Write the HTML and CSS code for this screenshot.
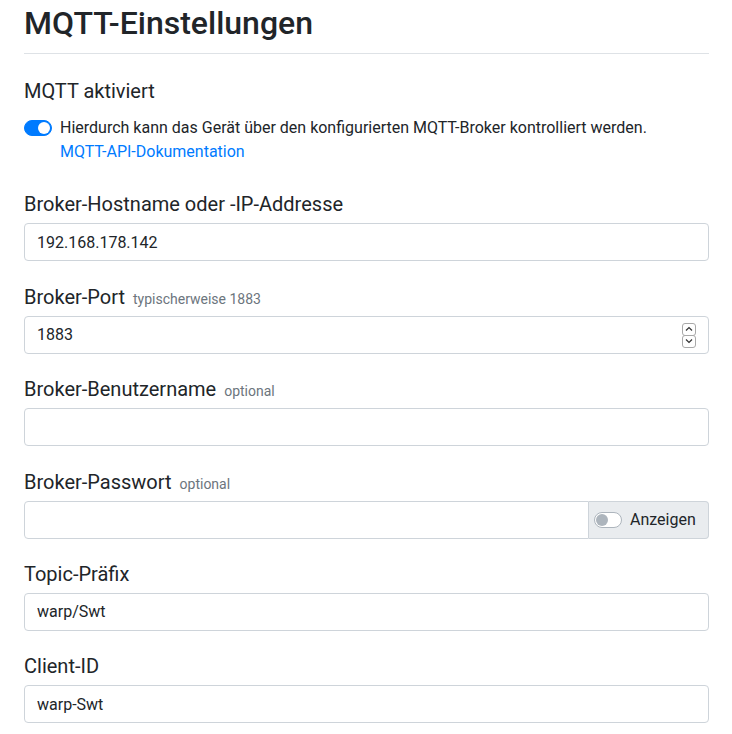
FILE: index.html
```html
<!DOCTYPE html>
<html lang="de">
<head>
<meta charset="utf-8">
<link rel="stylesheet" href="styles.css">
</head>
<body>
<main class="page">
  <h1 class="title">MQTT-Einstellungen</h1>
  <hr class="divider">

  <div class="group group-first">
    <div class="label">MQTT aktiviert</div>
    <label class="switch-row">
      <span class="switch on"><span class="knob"></span></span>
      <span class="switch-text">Hierdurch kann das Gerät über den konfigurierten MQTT-Broker kontrolliert werden.<br><a class="link" href="#">MQTT-API-Dokumentation</a></span>
    </label>
  </div>

  <div class="group">
    <label class="label">Broker-Hostname oder -IP-Addresse</label>
    <input class="field" type="text" value="192.168.178.142">
  </div>

  <div class="group">
    <label class="label">Broker-Port <span class="hint">typischerweise 1883</span></label>
    <div class="number-wrap">
      <input class="field field-number" type="number" value="1883">
      <span class="spinner" aria-hidden="true">
        <span class="spin-btn">
          <svg width="8" height="6" viewBox="0 0 8 6"><path d="M1 4.5 L4 1.5 L7 4.5" fill="none" stroke="#333" stroke-width="1.2"/></svg>
        </span>
        <span class="spin-btn">
          <svg width="8" height="6" viewBox="0 0 8 6"><path d="M1 1.5 L4 4.5 L7 1.5" fill="none" stroke="#333" stroke-width="1.2"/></svg>
        </span>
      </span>
    </div>
  </div>

  <div class="group">
    <label class="label">Broker-Benutzername <span class="hint">optional</span></label>
    <input class="field" type="text" value="">
  </div>

  <div class="group">
    <label class="label">Broker-Passwort <span class="hint">optional</span></label>
    <div class="input-group">
      <input class="field field-left" type="password" value="">
      <div class="addon">
        <span class="switch off"><span class="knob"></span></span>
        <span class="addon-text">Anzeigen</span>
      </div>
    </div>
  </div>

  <div class="group">
    <label class="label">Topic-Präfix</label>
    <input class="field" type="text" value="warp/Swt">
  </div>

  <div class="group">
    <label class="label">Client-ID</label>
    <input class="field" type="text" value="warp-Swt">
  </div>
</main>
</body>
</html>
```

FILE: styles.css
```css
* { box-sizing: border-box; }

html, body {
  margin: 0;
  padding: 0;
  background: #ffffff;
}

body {
  font-family: Roboto, "Liberation Sans", sans-serif;
  font-size: 16px;
  line-height: 1.5;
  color: #212529;
}

.page {
  width: 685px;
  margin-left: 24px;
}

.title {
  margin: 0;
  padding-top: 4px;
  font-size: 32px;
  font-weight: 500;
  line-height: 38px;
}

.divider {
  margin: 11px 0 0 0;
  border: 0;
  border-top: 1px solid #dee2e6;
  height: 0;
}

.group {
  margin-bottom: 16px;
}

.group-first {
  margin-top: 22px;
  margin-bottom: 21px;
}

.label {
  display: block;
  font-size: 20px;
  line-height: 30px;
  padding-top: 4.4px;
  margin-bottom: 4px;
}

.group-first .label {
  padding-top: 0;
  margin-bottom: 10px;
}

.hint {
  font-size: 14px;
  line-height: 1;
  color: #6c757d;
  margin-left: 3px;
}

.switch-row {
  display: flex;
  align-items: flex-start;
  gap: 8px;
}

.switch {
  position: relative;
  flex: none;
  display: inline-block;
  width: 28px;
  height: 16px;
  border-radius: 8px;
  border: 1px solid #adb5bd;
  background: #ffffff;
}

.switch-row .switch {
  margin-top: 4px;
}

.switch.on {
  background: #007bff;
  border-color: #007bff;
}

.knob {
  position: absolute;
  top: 1px;
  left: 1px;
  width: 12px;
  height: 12px;
  border-radius: 50%;
  background: #adb5bd;
}

.switch.on .knob {
  left: 13px;
  background: #ffffff;
}

.link {
  color: #007bff;
  text-decoration: none;
}

.field {
  display: block;
  width: 100%;
  height: 38px;
  padding: 6px 12px;
  font-family: inherit;
  font-size: 16px;
  line-height: 24px;
  color: #212529;
  background: #ffffff;
  border: 1px solid #ced4da;
  border-radius: 4px;
  outline: none;
}

.number-wrap {
  position: relative;
}

.field-number {
  -moz-appearance: textfield;
  padding-right: 32px;
}

.field-number::-webkit-inner-spin-button,
.field-number::-webkit-outer-spin-button {
  -webkit-appearance: none;
  margin: 0;
}

.spinner {
  position: absolute;
  right: 13px;
  top: 7px;
  width: 14px;
  height: 25px;
  display: flex;
  flex-direction: column;
}

.spin-btn {
  flex: 1;
  display: flex;
  align-items: center;
  justify-content: center;
  border: 1px solid #a9a9a9;
  border-radius: 3px;
  background: #ffffff;
}

.spin-btn + .spin-btn {
  margin-top: -1px;
}

.input-group {
  display: flex;
}

.field-left {
  flex: 1;
  border-radius: 4px 0 0 4px;
}

.addon {
  flex: none;
  width: 120px;
  height: 38px;
  display: flex;
  align-items: center;
  gap: 8px;
  padding: 0 12px 0 5px;
  background: #e9ecef;
  border: 1px solid #ced4da;
  border-left: 0;
  border-radius: 0 4px 4px 0;
}

.addon-text {
  font-size: 16px;
}
```
